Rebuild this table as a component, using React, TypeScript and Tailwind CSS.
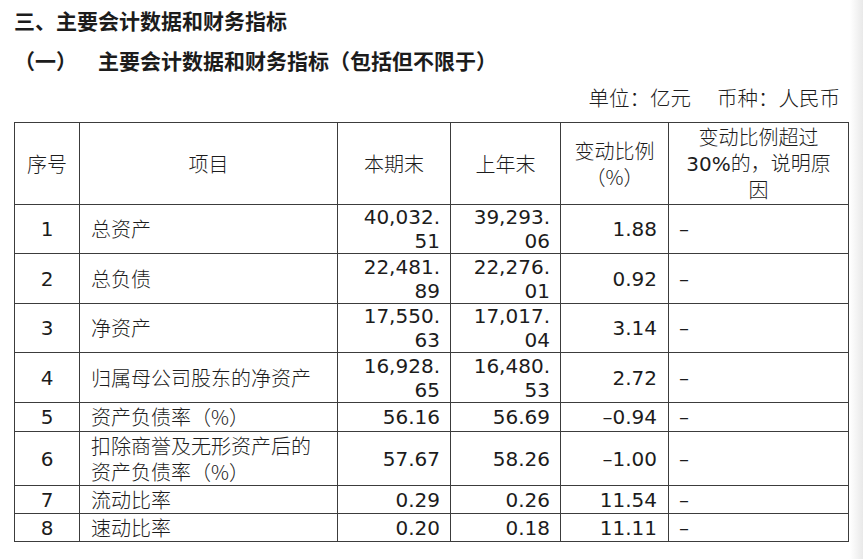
import React from "react";

const NUM = "font-['DejaVu_Sans','Noto_Sans_CJK_SC',sans-serif]";
const CJK = "font-['Noto_Sans_CJK_SC','DejaVu_Sans',sans-serif] font-light";

type Row = {
  no: string;
  item: React.ReactNode;
  cur: React.ReactNode;
  prev: React.ReactNode;
  chg: string;
  h: string;
  lh: string;
};

const rows: Row[] = [
  { no: "1", item: "总资产", cur: <>40,032.<br />51</>, prev: <>39,293.<br />06</>, chg: "1.88", h: "h-[49px]", lh: "leading-[24px]" },
  { no: "2", item: "总负债", cur: <>22,481.<br />89</>, prev: <>22,276.<br />01</>, chg: "0.92", h: "h-[50px]", lh: "leading-[24px]" },
  { no: "3", item: "净资产", cur: <>17,550.<br />63</>, prev: <>17,017.<br />04</>, chg: "3.14", h: "h-[49px]", lh: "leading-[24px]" },
  { no: "4", item: "归属母公司股东的净资产", cur: <>16,928.<br />65</>, prev: <>16,480.<br />53</>, chg: "2.72", h: "h-[50px]", lh: "leading-[24px]" },
  { no: "5", item: "资产负债率（%）", cur: "56.16", prev: "56.69", chg: "–0.94", h: "h-[29px]", lh: "leading-[24px]" },
  { no: "6", item: <>扣除商誉及无形资产后的<br />资产负债率（%）</>, cur: "57.67", prev: "58.26", chg: "–1.00", h: "h-[54px]", lh: "leading-[26px]" },
  { no: "7", item: "流动比率", cur: "0.29", prev: "0.26", chg: "11.54", h: "h-[28px]", lh: "leading-[24px]" },
  { no: "8", item: "速动比率", cur: "0.20", prev: "0.18", chg: "11.11", h: "h-[28px]", lh: "leading-[24px]" },
];

export default function App() {
  const cell = "border border-[#3c3c3c] p-0 align-middle";
  return (
    <div className="flex w-[863px] h-[559px] bg-white text-[#1c1c1c] overflow-hidden">
      <div className="w-[850px] pl-[14px] flex flex-col">
        <div className="mt-[6px] text-[21px] leading-[28px] font-['Noto_Sans_CJK_SC',sans-serif] font-bold">
          三、主要会计数据和财务指标
        </div>
        <div className="mt-[12px] flex text-[21px] leading-[28px] font-['Noto_Sans_CJK_SC',sans-serif] font-bold">
          <span>（一）</span>
          <span className="ml-[21px]">主要会计数据和财务指标（包括但不限于）</span>
        </div>
        <div className="mt-[9px] flex justify-end gap-[26px] pr-[8px] w-[834px] text-[20.5px] leading-[28px] font-['Noto_Sans_CJK_SC',sans-serif] font-light">
          <span>单位：亿元</span>
          <span>币种：人民币</span>
        </div>
        <table className="mt-[11px] w-[834px] table-fixed border-collapse text-[20px]">
          <colgroup>
            <col className="w-[65px]" />
            <col className="w-[258px]" />
            <col className="w-[113px]" />
            <col className="w-[110px]" />
            <col className="w-[108px]" />
            <col className="w-[180px]" />
          </colgroup>
          <thead>
            <tr className="h-[82px]">
              <th className={`${cell} ${CJK} text-center leading-[26px]`}>序号</th>
              <th className={`${cell} ${CJK} text-center leading-[26px]`}>项目</th>
              <th className={`${cell} ${CJK} text-center leading-[26px]`}>本期末</th>
              <th className={`${cell} ${CJK} text-center leading-[26px]`}>上年末</th>
              <th className={`${cell} ${CJK} text-center leading-[26px]`}>
                变动比例<br />（%）
              </th>
              <th className={`${cell} ${CJK} text-center leading-[26px]`}>
                变动比例超过<br />
                <span className={`${NUM} font-normal`}>30%</span>的，说明原<br />因
              </th>
            </tr>
          </thead>
          <tbody>
            {rows.map((r) => (
              <tr key={r.no} className={r.h}>
                <td className={`${cell} ${NUM} text-center ${r.lh}`}>{r.no}</td>
                <td className={`${cell} ${CJK} text-left pl-[11px] ${r.lh}`}>{r.item}</td>
                <td className={`${cell} ${NUM} text-right pr-[10px] ${r.lh}`}>{r.cur}</td>
                <td className={`${cell} ${NUM} text-right pr-[10px] ${r.lh}`}>{r.prev}</td>
                <td className={`${cell} ${NUM} text-right pr-[11px] ${r.lh}`}>{r.chg}</td>
                <td className={`${cell} ${NUM} text-left pl-[10px] ${r.lh}`}>–</td>
              </tr>
            ))}
          </tbody>
        </table>
      </div>
      <div className="w-[13px] h-full bg-[linear-gradient(to_right,#ffffff,#e9e9e9)]" />
    </div>
  );
}
